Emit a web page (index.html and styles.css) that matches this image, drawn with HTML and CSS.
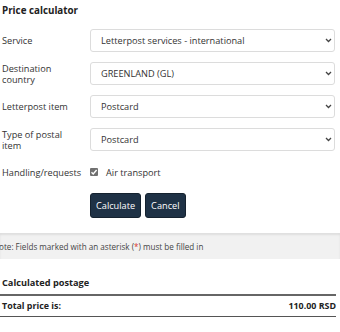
FILE: index.html
```html
<!doctype html>
<html lang="en">
   <head>
      <meta charset="UTF-8" />
      <meta name="viewport" content="width=device-width, initial-scale=1.0" />
      <title>Price calculator</title>
      <link rel="stylesheet" href="styles.css">
   </head>
   <body>
      <div class="calc">
         <h2>Price calculator</h2>
         <form class="fields">
            <label class="lbl" for="service">Service</label>
            <div class="pick">
               <select id="service">
                  <option>Letterpost services - international</option>
               </select>
               <svg class="arrow" width="7" height="5" viewBox="0 0 7 5"><path d="M1 1l2.5 2.5L6 1" fill="none" stroke="#444" stroke-width="1.3"/></svg>
            </div>

            <label class="lbl" for="country">Destination country</label>
            <div class="pick">
               <select id="country">
                  <option>GREENLAND (GL)</option>
               </select>
               <svg class="arrow" width="7" height="5" viewBox="0 0 7 5"><path d="M1 1l2.5 2.5L6 1" fill="none" stroke="#444" stroke-width="1.3"/></svg>
            </div>

            <label class="lbl" for="item">Letterpost item</label>
            <div class="pick">
               <select id="item">
                  <option>Postcard</option>
               </select>
               <svg class="arrow" width="7" height="5" viewBox="0 0 7 5"><path d="M1 1l2.5 2.5L6 1" fill="none" stroke="#444" stroke-width="1.3"/></svg>
            </div>

            <label class="lbl" for="type">Type of postal item</label>
            <div class="pick">
               <select id="type">
                  <option>Postcard</option>
               </select>
               <svg class="arrow" width="7" height="5" viewBox="0 0 7 5"><path d="M1 1l2.5 2.5L6 1" fill="none" stroke="#444" stroke-width="1.3"/></svg>
            </div>

            <span class="lbl">Handling/requests</span>
            <div class="check">
               <span class="box">
                  <svg width="8" height="8" viewBox="0 0 8 8"><path d="M1.5 4.2l1.7 1.7L6.6 2" fill="none" stroke="#fff" stroke-width="1.4"/></svg>
               </span>
               <span>Air transport</span>
            </div>

            <span></span>
            <div class="buttons">
               <button type="button" class="btn">Calculate</button>
               <button type="button" class="btn">Cancel</button>
            </div>
         </form>
      </div>

      <div class="note">
         <p>Note: Fields marked with an asterisk (<span class="star">*</span>) must be filled in</p>
      </div>

      <div class="result">
         <h3>Calculated postage</h3>
         <div class="total">
            <span>Total price is:</span>
            <span>110.00 RSD</span>
         </div>
      </div>
   </body>
</html>
```

FILE: styles.css
```css
* {
   margin: 0;
   padding: 0;
   box-sizing: border-box;
   font-family: "Open Sans", sans-serif;
}
body {
   background: #fff;
   color: #333;
   font-size: 9.2px;
   overflow: hidden;
}
.calc {
   padding: 4px 5px 0 2px;
}
.calc h2 {
   font-size: 9.8px;
   font-weight: 700;
   color: #222;
   line-height: 13px;
}
.fields {
   display: grid;
   grid-template-columns: 88px 1fr;
   row-gap: 10px;
   align-items: center;
   margin-top: 12px;
}
.lbl {
   line-height: 11px;
   color: #333;
   padding-right: 14px;
}
.pick {
   position: relative;
}
.pick select {
   appearance: none;
   width: 100%;
   height: 23px;
   padding: 0 20px 0 10px;
   border: 1px solid #dcdcdc;
   border-radius: 3px;
   background: #fff;
   color: #333;
   font-size: 9.2px;
   outline: none;
}
.arrow {
   position: absolute;
   right: 3px;
   top: 9px;
   pointer-events: none;
}
.check {
   display: flex;
   align-items: center;
   gap: 8px;
   height: 22px;
}
.box {
   display: flex;
   align-items: center;
   justify-content: center;
   width: 8px;
   height: 8px;
   background: #707070;
   border-radius: 1px;
}
.box svg {
   display: block;
}
.buttons {
   display: flex;
   gap: 4px;
}
.btn {
   height: 25px;
   padding: 0 5px;
   background: #1f3246;
   border: 1px solid #15222f;
   border-radius: 3px;
   color: #fff;
   font-size: 9.2px;
}
.note {
   margin-top: 15px;
   height: 26px;
   display: flex;
   align-items: center;
   background: #f1f1f1;
   box-shadow: inset 0 2px 2px rgba(0, 0, 0, 0.08);
   overflow: hidden;
}
.note p {
   font-size: 8.1px;
   text-indent: -7px;
   white-space: nowrap;
   color: #444;
}
.star {
   color: #d9342b;
}
.result {
   padding: 17px 4px 0 0;
}
.result h3 {
   font-size: 9.2px;
   font-weight: 700;
   color: #222;
   padding-left: 2px;
   line-height: 13px;
   padding-bottom: 5px;
   border-bottom: 2px solid #666;
}
.total {
   display: flex;
   justify-content: space-between;
   padding: 3px 0 3px 2px;
   font-size: 8.9px;
   font-weight: 700;
   color: #222;
   line-height: 14px;
   border-bottom: 1px solid #555;
}
```
